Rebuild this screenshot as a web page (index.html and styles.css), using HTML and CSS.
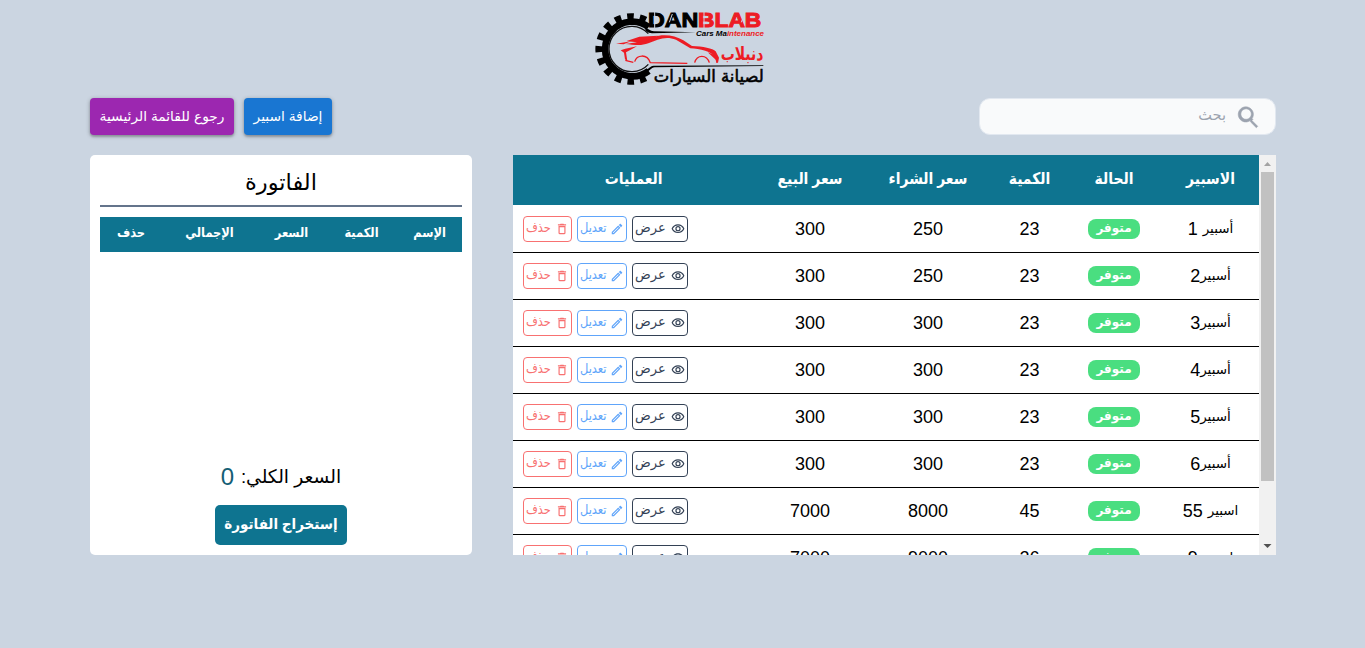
FILE: index.html
```html
<!DOCTYPE html>
<html lang="ar" dir="rtl">
<head>
<meta charset="utf-8">
<title>دنبلاب</title>
<link rel="stylesheet" href="styles.css">
</head>
<body>
<svg class="sprite" aria-hidden="true">
  <symbol id="eye" viewBox="0 0 24 24"><path d="M12 6c3.790 0 7.170 2.130 8.820 5.500C19.170 14.870 15.790 17 12 17s-7.170-2.130-8.820-5.500C4.830 8.130 8.210 6 12 6m0-2C7 4 2.730 7.110 1 11.500 2.730 15.890 7 19 12 19s9.270-3.110 11-7.500C21.270 7.110 17 4 12 4zm0 5a2.500 2.500 0 0 1 0 5 2.500 2.500 0 0 1 0-5m0-2a4.500 4.500 0 0 0 0 9 4.500 4.500 0 0 0 0-9z"/></symbol>
  <symbol id="pen" viewBox="0 0 24 24"><path d="M14.060 9.020l.92.92L5.920 19H5v-.92l9.060-9.060M17.660 3c-.25 0-.51.1-.7.290l-1.830 1.830 3.750 3.750 1.830-1.830a1 1 0 0 0 0-1.410l-2.340-2.340c-.2-.2-.45-.29-.71-.29zm-3.600 3.190L3 17.250V21h3.750L17.810 9.940l-3.750-3.750z"/></symbol>
  <symbol id="bin" viewBox="0 0 24 24"><path d="M6 19c0 1.100.9 2 2 2h8c1.100 0 2-.9 2-2V7H6v12zM8 9h8v10H8V9zm7.500-5l-1-1h-5l-1 1H5v2h14V4z"/></symbol>
</svg>
<main class="page">
  <header class="brand">
    <svg class="logo" viewBox="0 0 570 285" role="img" direction="ltr">
      <path class="teeth" pathLength="410" d="M178 62A95 95 0 1 0 178 232"/>
      <path class="gear" d="M188 81A82 82 0 1 0 188 213"/>
      <path class="ring" d="M187 101A68 68 0 1 0 187 193"/>
      <path d="M176 84C190 86 191 93 204 94L330 97L198 100Q188 100 180 93ZM176 210C190 207 190 199 203 197L532 196L532 198L206 202C195 203 191 213 181 217Z"/>
      <path class="red" d="M120 123C152 124 178 121 202 111C233 101 267 106 292 121L318 138C350 139 381 145 389 154L399 173L396 188L391 189L388 174C380 154 340 146 313 145L270 119C238 107 214 119 187 130C164 139 143 134 118 132L153 127Z"/>
      <path class="red" d="M118 146L153 139L134 149L120 157L124 183L117 178L114 158L104 151ZM90 131L135 124L113 133ZM122 123L160 110L216 107L180 124ZM365 157L394 168L391 181Z"/>
      <path class="car-line" d="M118 181L142 187M146 185C152 164 183 160 193 188L304 190M326 188C333 163 362 163 370 188"/>
      <text class="word dark" x="186" y="82" textLength="151" lengthAdjust="spacingAndGlyphs">DAN</text>
      <text class="word light" x="336" y="82" textLength="190" lengthAdjust="spacingAndGlyphs">BLAB</text>
      <path class="slits" d="M206 36V84M354 36V84M250 67L259 42M466 67L475 42"/>
      <text class="sub" x="330" y="109" textLength="204" lengthAdjust="spacingAndGlyphs">Cars Ma<tspan class="light">intenance</tspan></text>
      <text class="arabic light" transform="translate(404 179) scale(1 1.250)" x="0" y="0" font-size="43" textLength="128" lengthAdjust="spacingAndGlyphs">دنبلاب</text>
      <text class="arabic thin dark" transform="translate(203 246) scale(1 1.150)" x="0" y="0" font-size="44" textLength="330" lengthAdjust="spacingAndGlyphs">لصيانة السيارات</text>
    </svg>
  </header>
  <div class="toolbar">
    <label class="search">
      <svg viewBox="0 0 24 24"><path d="M15.500 14h-.79l-.28-.27A6.500 6.500 0 1 0 13 15.100l.27.28v.79l5 4.990L19.490 20l-4.990-5zm-6 0A4.500 4.500 0 1 1 9.500 5a4.500 4.500 0 0 1 0 9z"/></svg>
      <span>بحث</span>
    </label>
    <div class="actions">
      <button class="add"><span>إضافة اسبير</span></button>
      <button class="back"><span>رجوع للقائمة الرئيسية</span></button>
    </div>
  </div>
  <div class="content">
    <section class="stock">
      <div class="scrollbar"><svg viewBox="0 0 17 17"><path d="M5 11h7L8.500 7z" fill="#a3a3a3"/></svg><div class="thumb"></div><svg viewBox="0 0 17 17"><path d="M4.500 6h8L8.500 10z" fill="#505050"/></svg></div>
      <div class="table">
        <div class="row head"><b>الاسبير</b><b>الحالة</b><b>الكمية</b><b>سعر الشراء</b><b>سعر البيع</b><b>العمليات</b></div>
        <div class="row"><span><i>أسبير</i> 1</span><span><em>متوفر</em></span><span>23</span><span>250</span><span>300</span><div class="ops"><a class="view"><svg><use href="#eye"/></svg><u>عرض</u></a><a class="edit"><svg><use href="#pen"/></svg><u>تعديل</u></a><a class="del"><svg><use href="#bin"/></svg><u>حذف</u></a></div></div>
        <div class="row"><span><i>أسبير</i>2</span><span><em>متوفر</em></span><span>23</span><span>250</span><span>300</span><div class="ops"><a class="view"><svg><use href="#eye"/></svg><u>عرض</u></a><a class="edit"><svg><use href="#pen"/></svg><u>تعديل</u></a><a class="del"><svg><use href="#bin"/></svg><u>حذف</u></a></div></div>
        <div class="row"><span><i>أسبير</i>3</span><span><em>متوفر</em></span><span>23</span><span>300</span><span>300</span><div class="ops"><a class="view"><svg><use href="#eye"/></svg><u>عرض</u></a><a class="edit"><svg><use href="#pen"/></svg><u>تعديل</u></a><a class="del"><svg><use href="#bin"/></svg><u>حذف</u></a></div></div>
        <div class="row"><span><i>أسبير</i>4</span><span><em>متوفر</em></span><span>23</span><span>300</span><span>300</span><div class="ops"><a class="view"><svg><use href="#eye"/></svg><u>عرض</u></a><a class="edit"><svg><use href="#pen"/></svg><u>تعديل</u></a><a class="del"><svg><use href="#bin"/></svg><u>حذف</u></a></div></div>
        <div class="row"><span><i>أسبير</i>5</span><span><em>متوفر</em></span><span>23</span><span>300</span><span>300</span><div class="ops"><a class="view"><svg><use href="#eye"/></svg><u>عرض</u></a><a class="edit"><svg><use href="#pen"/></svg><u>تعديل</u></a><a class="del"><svg><use href="#bin"/></svg><u>حذف</u></a></div></div>
        <div class="row"><span><i>أسبير</i>6</span><span><em>متوفر</em></span><span>23</span><span>300</span><span>300</span><div class="ops"><a class="view"><svg><use href="#eye"/></svg><u>عرض</u></a><a class="edit"><svg><use href="#pen"/></svg><u>تعديل</u></a><a class="del"><svg><use href="#bin"/></svg><u>حذف</u></a></div></div>
        <div class="row"><span><i>اسبير</i> 55</span><span><em>متوفر</em></span><span>45</span><span>8000</span><span>7000</span><div class="ops"><a class="view"><svg><use href="#eye"/></svg><u>عرض</u></a><a class="edit"><svg><use href="#pen"/></svg><u>تعديل</u></a><a class="del"><svg><use href="#bin"/></svg><u>حذف</u></a></div></div>
        <div class="row"><span><i>اسبير</i> 9</span><span><em>متوفر</em></span><span>26</span><span>9000</span><span>7000</span><div class="ops"><a class="view"><svg><use href="#eye"/></svg><u>عرض</u></a><a class="edit"><svg><use href="#pen"/></svg><u>تعديل</u></a><a class="del"><svg><use href="#bin"/></svg><u>حذف</u></a></div></div>
      </div>
    </section>
    <aside class="invoice">
      <h1>الفاتورة</h1>
      <div class="cols"><b>الإسم</b><b>الكمية</b><b>السعر</b><b>الإجمالي</b><b>حذف</b></div>
      <p class="total"><span>السعر الكلي:</span> <strong>0</strong></p>
      <button class="issue"><span>إستخراج الفاتورة</span></button>
    </aside>
  </div>
</main>
</body>
</html>
```
FILE: styles.css
```css
* { box-sizing: border-box; }
body { margin: 0; height: 648px; overflow: hidden; background: #cbd5e1; font-family: "Liberation Sans", "DejaVu Sans", sans-serif; color: #000; }
button { border: 0; padding: 0; font: inherit; color: #fff; }
i, em { font-style: normal; }
u { text-decoration: none; }
.sprite { display: block; width: 0; height: 0; }
.page { padding: 0 89px 0 90px; }
.brand { height: 98px; display: flex; justify-content: center; }
.logo { width: 190px; height: 95px; margin-right: 5px; direction: ltr; }
.teeth { fill: none; stroke: #000; stroke-width: 25; stroke-dasharray: 20 19; }
.gear { fill: none; stroke: #000; stroke-width: 20; }
.ring { fill: none; stroke: #111; stroke-width: 4; }
.red { fill: #ed1c24; }
.car-line { fill: none; stroke: #ed1c24; stroke-width: 4; }
.word { font: 700 62px "Liberation Sans", sans-serif; }
.dark { fill: #000; stroke: #000; stroke-width: 3; }
.word.light { stroke: #ed1c24; stroke-width: 3; }
.light { fill: #ed1c24; }
.slits { fill: none; stroke: #cbd5e1; stroke-width: 3; }
.sub { font: italic 700 24px "Liberation Sans", sans-serif; }
.arabic { font-family: "DejaVu Sans", sans-serif; font-weight: 700; }
.arabic.thin { font-weight: 400; stroke-width: 1.5; }

.toolbar { height: 37px; display: flex; justify-content: space-between; }
.search { width: 297px; height: 37px; padding-right: 12px; display: flex; align-items: center; gap: 9px; background: #f9fafb; border: 1px solid #e2e8f0; border-radius: 11px; color: #9ca3af; font-size: 14.5px; }
.search svg { width: 28px; height: 28px; fill: #9ca3af; stroke: #9ca3af; stroke-width: .5; }
.search span { line-height: 30px; padding-bottom: 3px; }
.actions { display: flex; gap: 10px; }
.actions button { height: 37px; padding-bottom: 2px; border-radius: 4px; font-size: 13.8px; box-shadow: 0 1px 4px rgba(0,0,0,.3), 0 2px 2px rgba(0,0,0,.15); }
.add { width: 88px; background: #1976d2; }
.back { width: 144px; background: #9c27b0; }

.content { margin-top: 20px; display: flex; justify-content: space-between; }
.stock { width: 763px; height: 400px; display: flex; overflow: hidden; background: #fff; }
.table { width: 746px; }
.row { display: grid; grid-template-columns: 97px 96px 73px 130px 106px 244px; align-items: center; height: 47px; border-bottom: 1px solid #000; text-align: center; font-size: 18px; }
.row i { display: inline-block; transform: translateY(-2px); font-size: 13.5px; }
.head { height: 50px; margin-bottom: 1px; border: 0; background: #0e7490; color: #fff; font-size: 16px; }
.head b { transform: scaleX(.87); padding-bottom: 3px; }
.head b:last-child { padding-right: 3px; }
.row em { display: block; width: 52px; height: 20px; margin: 0 auto; border-radius: 8px; background: #4ade80; color: #fff; font-size: 12px; font-weight: 700; line-height: 18px; }
.ops { display: flex; justify-content: flex-end; gap: 5px; padding-left: 10px; }
.ops a { height: 26px; display: flex; align-items: center; justify-content: space-between; padding: 0 2px; border: 1px solid; border-radius: 4px; font-size: 13px; white-space: nowrap; }
.ops u { transform: scaleX(.88); transform-origin: left; line-height: 20px; padding-bottom: 2px; }
.ops .view u { transform: none; }
.ops svg { flex: none; width: 14px; height: 14px; fill: currentColor; }
.view { width: 56px; color: #334155; }
.edit { width: 50px; color: #60a5fa; }
.del { width: 49px; color: #f87171; }
.edit u, .del u { margin-right: -4px; }
.scrollbar { width: 17px; display: flex; flex-direction: column; align-items: center; background: #f1f1f1; }
.scrollbar svg { width: 17px; height: 17px; }
.thumb { width: 13px; height: 309px; margin-bottom: auto; background: #c1c1c1; }

.invoice { width: 382px; height: 400px; padding: 10px; display: flex; flex-direction: column; align-items: center; background: #fff; border-radius: 5px; }
.invoice h1 { width: 362px; height: 42px; margin: 0 0 10px; border-bottom: 2px solid #64748b; text-align: center; font-size: 22.5px; font-weight: 400; line-height: 36px; }
.cols { display: grid; grid-template-columns: 65px 71px 69px 95px 62px; width: 362px; height: 35px; align-items: center; background: #0e7490; color: #fff; font-size: 13px; line-height: 30px; text-align: center; }
.cols b { transform: scaleX(.88); padding-bottom: 4px; }
.total { margin: auto 0 13px; height: 30px; line-height: 30px; font-size: 24px; }
.total span { display: inline-block; transform: translateY(-2px); font-size: 18.7px; }
.total strong { font-weight: 400; color: #155e75; }
.issue { width: 132px; height: 40px; padding-bottom: 2px; border-radius: 5px; background: #0e7490; font-size: 15px; font-weight: 700; }
.issue span { display: inline-block; transform: scaleX(.9); margin: 0 -10px; }
```
